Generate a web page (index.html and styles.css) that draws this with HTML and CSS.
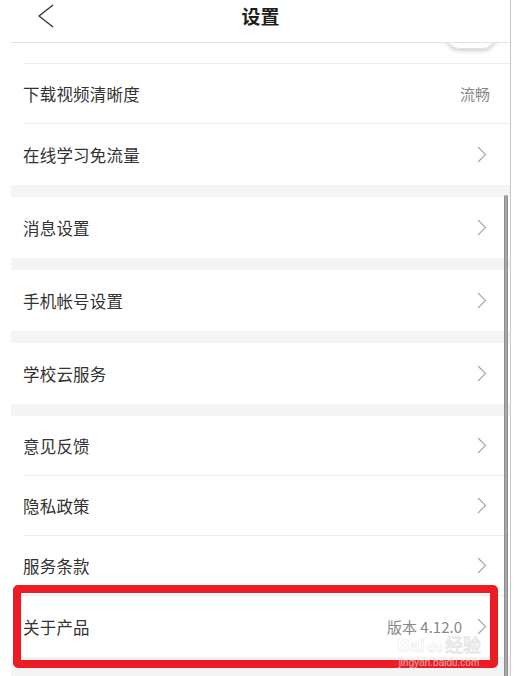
FILE: index.html
```html
<!DOCTYPE html>
<html lang="zh-CN">
<head>
<meta charset="utf-8">
<title>设置</title>
<link rel="stylesheet" href="styles.css">
</head>
<body>
<div class="app">
  <header class="header">
    <svg class="back" width="16" height="24" viewBox="0 0 16 24"><polyline points="15,1 1,12 15,23" fill="none" stroke="#333" stroke-width="1.4" stroke-linejoin="miter"/></svg>
    <h1 class="title">设置</h1>
  </header>
  <div class="list">
    <div class="group first">
      <div class="row partial"><span class="label"></span><span class="toggle"></span></div>
      <div class="row"><span class="label">下载视频清晰度</span><span class="value plain">流畅</span></div>
      <div class="row"><span class="label">在线学习免流量</span><svg class="chev" width="10" height="17" viewBox="0 0 10 17"><polyline points="1,1 8.5,8.5 1,16" fill="none" stroke="#a9a9a9" stroke-width="1.2"/></svg></div>
    </div>
    <div class="group">
      <div class="row"><span class="label">消息设置</span><svg class="chev" width="10" height="17" viewBox="0 0 10 17"><polyline points="1,1 8.5,8.5 1,16" fill="none" stroke="#a9a9a9" stroke-width="1.2"/></svg></div>
    </div>
    <div class="group">
      <div class="row"><span class="label">手机帐号设置</span><svg class="chev" width="10" height="17" viewBox="0 0 10 17"><polyline points="1,1 8.5,8.5 1,16" fill="none" stroke="#a9a9a9" stroke-width="1.2"/></svg></div>
    </div>
    <div class="group">
      <div class="row"><span class="label">学校云服务</span><svg class="chev" width="10" height="17" viewBox="0 0 10 17"><polyline points="1,1 8.5,8.5 1,16" fill="none" stroke="#a9a9a9" stroke-width="1.2"/></svg></div>
    </div>
    <div class="group">
      <div class="row"><span class="label">意见反馈</span><svg class="chev" width="10" height="17" viewBox="0 0 10 17"><polyline points="1,1 8.5,8.5 1,16" fill="none" stroke="#a9a9a9" stroke-width="1.2"/></svg></div>
      <div class="row"><span class="label">隐私政策</span><svg class="chev" width="10" height="17" viewBox="0 0 10 17"><polyline points="1,1 8.5,8.5 1,16" fill="none" stroke="#a9a9a9" stroke-width="1.2"/></svg></div>
      <div class="row"><span class="label">服务条款</span><svg class="chev" width="10" height="17" viewBox="0 0 10 17"><polyline points="1,1 8.5,8.5 1,16" fill="none" stroke="#a9a9a9" stroke-width="1.2"/></svg></div>
      <div class="row"><span class="label">关于产品</span><span class="value">版本 4.12.0</span><svg class="chev" width="10" height="17" viewBox="0 0 10 17"><polyline points="1,1 8.5,8.5 1,16" fill="none" stroke="#a9a9a9" stroke-width="1.2"/></svg></div>
    </div>
  </div>
  <div class="scrollbar"></div>
  <div class="highlight"></div>
  <div class="watermark"><span class="wm-logo">Bai<span class="wm-du">du</span>经验</span><span class="wm-url">jingyan.baidu.com</span></div>
</div>
</body>
</html>
```
FILE: styles.css
```css
* { box-sizing: border-box; }
html, body { margin: 0; padding: 0; background: #fff; }
body { width: 515px; height: 676px; overflow: hidden; font-family: "Noto Sans CJK SC", "Noto Sans", sans-serif; }

.app {
  position: relative;
  margin-left: 11px;
  width: 500px;
  height: 676px;
  border-right: 1px solid #c9c9c9;
  overflow: hidden;
  background: #f4f4f4;
}

.header {
  position: relative;
  z-index: 2;
  height: 43px;
  background: #fff;
  border-bottom: 1px solid #e3e3e3;
  display: flex;
  justify-content: center;
  padding-top: 3px;
}
.back { position: absolute; left: 27px; top: 4px; }
.title {
  margin: 0;
  font-size: 19px;
  font-weight: 700;
  color: #1e1e1e;
  line-height: 26px;
}

.list { display: flex; flex-direction: column; gap: 12px; }
.group { background: #fff; display: flex; flex-direction: column; }
.group.first { margin-top: -39px; }

.row {
  height: 61px;
  margin-left: 12px;
  padding-right: 22px;
  display: flex;
  align-items: center;
  border-bottom: 1px solid #ececec;
}
.group .row:not(:last-child) { height: 60px; }
.group .row:last-child { border-bottom: none; }

.label { flex: 1; font-size: 16.5px; color: #333; letter-spacing: 0.2px; }
.value { font-size: 15px; color: #888; margin-right: 15px; }
.value.plain { margin-right: -2px; }

.chev { display: block; margin-right: 1px; }

.toggle {
  width: 52px; height: 31px;
  border-radius: 16px;
  background: #fff;
  box-shadow: 0 2px 4px rgba(0,0,0,0.2), inset 0 0 0 1px #e2e2e2;
  margin-right: -9px;
}

.scrollbar {
  position: absolute;
  left: 493px; top: 195px;
  width: 4px; height: 490px;
  background: #a8a8a8;
  border-left: 1px solid #8e8e8e;
  border-right: 1px solid #8e8e8e;
  border-radius: 2px;
}

.highlight {
  position: absolute;
  left: 2px; top: 585px;
  width: 485px; height: 83px;
  border: 8px solid #ed1c24;
  border-radius: 5px;
}

.watermark {
  position: absolute;
  left: 386px; top: 637px;
  display: flex; flex-direction: column; align-items: center;
  font-family: "Liberation Sans", sans-serif;
  color: rgba(255,255,255,0.6);
  -webkit-text-stroke: 0.6px rgba(150,150,150,0.22);
}
.wm-logo { font-size: 18px; font-weight: 700; line-height: 18px; }
.wm-du { font-size: 13px; margin: 0 2px; }
.wm-url { font-size: 10px; line-height: 12px; }
```
